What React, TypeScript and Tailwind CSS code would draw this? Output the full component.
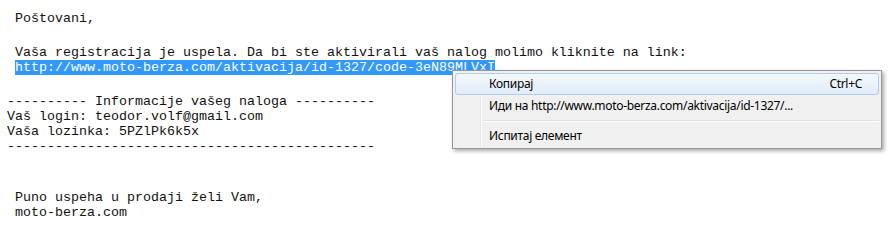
import React from "react";

const mono = { fontFamily: '"Liberation Mono", "Courier New", monospace' };

function Line({ children, className = "" }: { children?: React.ReactNode; className?: string }) {
  return <div className={`h-[15px] leading-[15px] whitespace-pre ${className}`}>{children}</div>;
}

export default function App() {
  return (
    <div className="relative w-[895px] h-[243px] bg-white overflow-hidden">
      <div className="pl-[7px] pt-[11px] text-[13.33px] text-[#111]" style={mono}>
        <Line>{" Poštovani,"}</Line>
        <div className="h-[19px]" />
        <Line>{" Vaša registracija je uspela. Da bi ste aktivirali vaš nalog molimo kliknite na link:"}</Line>
        <Line>
          {" "}
          <span className="bg-[#3399ff] text-white">http://www.moto-berza.com/aktivacija/id-1327/code-3eN89MLVxI</span>
        </Line>
        <div className="h-[19px]" />
        <Line>{"---------- Informacije vašeg naloga ----------"}</Line>
        <Line>{"Vaš login: teodor.volf@gmail.com"}</Line>
        <Line>{"Vaša lozinka: 5PZlPk6k5x"}</Line>
        <Line>{"----------------------------------------------"}</Line>
        <div className="h-[36px]" />
        <Line>{" Puno uspeha u prodaji želi Vam,"}</Line>
        <Line>{" moto-berza.com"}</Line>
      </div>

      <div
        className="absolute left-[452px] top-[70px] w-[430px] h-[79px] border border-[#979797] bg-[#f0f0f0] shadow-[2px_2px_4px_rgba(0,0,0,0.35)] text-[12px] tracking-[-0.3px] text-black"
        style={{ fontFamily: '"Noto Sans", "Open Sans", sans-serif' }}
      >
        <div className="absolute left-[27px] top-[2px] bottom-[2px] w-[1px] bg-[#e2e3e3]" />
        <div className="absolute left-[28px] top-[2px] bottom-[2px] w-[1px] bg-white" />
        <div className="relative flex flex-col p-[2px]">
          <div className="flex items-center h-[22px] rounded-[3px] border border-[#aeccf1] bg-gradient-to-b from-[#f3f8fd] to-[#e1ecfa] pl-[33px] pr-[16px]">
            <span className="flex-1">Копирај</span>
            <span>Ctrl+C</span>
          </div>
          <div className="flex items-center h-[22px] pl-[34px]">
            <span>Иди на http://www.moto-berza.com/aktivacija/id-1327/...</span>
          </div>
          <div className="h-[8px] flex flex-col justify-center pl-[28px]">
            <div className="h-[1px] bg-[#e0e0e0]" />
            <div className="h-[1px] bg-white" />
          </div>
          <div className="flex items-center h-[22px] pl-[34px]">
            <span>Испитај елемент</span>
          </div>
        </div>
      </div>
    </div>
  );
}
